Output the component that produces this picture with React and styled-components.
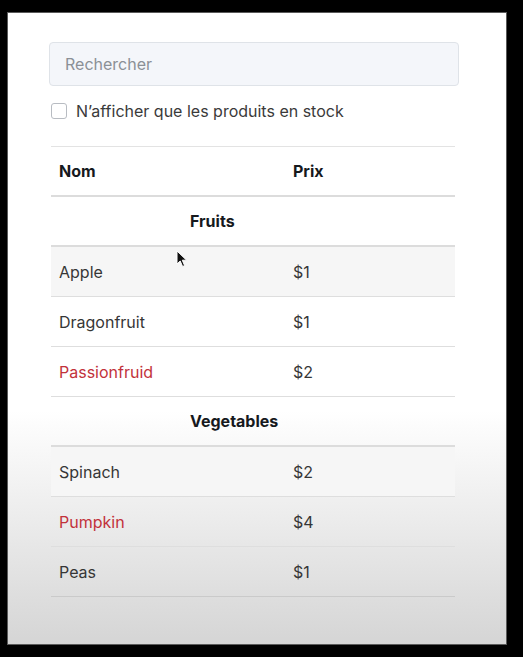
import React from "react";
import styled, { createGlobalStyle } from "styled-components";

const Global = createGlobalStyle`
  html, body { margin: 0; padding: 0; background: #000; }
  body { font-family: Inter, "Noto Sans", "Liberation Sans", sans-serif; }
  * { box-sizing: border-box; }
`;

const Frame = styled.div`
  width: 523px;
  height: 657px;
  background: #000;
  padding: 12px 16px 12px 7px;
`;

const Panel = styled.div`
  position: relative;
  width: 500px;
  height: 633px;
  border: 1px solid #5a5a5a;
  background: linear-gradient(to bottom, #ffffff 0%, #ffffff 63%, #ececec 80%, #d5d5d5 100%);
  padding: 29px 0 0 41px;
`;

const Content = styled.div`
  width: 410px;
  display: flex;
  flex-direction: column;
`;

const SearchInput = styled.input`
  width: 410px;
  height: 44px;
  border: 1px solid #dfe3e8;
  border-radius: 4px;
  background: #f4f6fa;
  padding: 0 15px;
  font-family: inherit;
  font-size: 16px;
  color: #333;
  outline: none;
  &::placeholder { color: #8b9096; }
`;

const CheckRow = styled.label`
  display: flex;
  align-items: center;
  gap: 9px;
  margin: 13px 0 0 2px;
  height: 24px;
  font-size: 16px;
  color: #3a3a3a;
`;

const Box = styled.span`
  width: 16px;
  height: 16px;
  border: 1px solid #b8bcc2;
  border-radius: 3px;
  background: #fff;
  flex: none;
`;

const Table = styled.table`
  margin: 23px 0 0 2px;
  width: 404px;
  border-collapse: separate;
  border-spacing: 0;
  font-size: 16px;
  color: #333;
  border-top: 1px solid #e3e3e3;
`;

const Row = styled.tr`
  background: ${(p) => (p.$striped ? "#f6f6f6" : "transparent")};
  & > * {
    border-bottom: ${(p) =>
      p.$thick ? "2px solid #dcdcdc" : `1px solid ${p.$last ? "#cacaca" : "#dedede"}`};
  }
`;

const HeadCell = styled.th`
  height: 50px;
  padding: 0 8px;
  text-align: left;
  font-weight: 700;
  color: #16191d;
  width: ${(p) => p.$w || "auto"};
`;

const CategoryCell = styled.th`
  height: 50px;
  padding: 0 0 0 139px;
  text-align: left;
  font-weight: 700;
  color: #16191d;
`;

const Cell = styled.td`
  height: 50px;
  padding: 0 8px;
  color: ${(p) => (p.$out ? "#c2323b" : "#363636")};
`;

const Cursor = styled.svg`
  position: absolute;
  left: 168px;
  top: 237px;
`;

const data = [
  {
    category: "Fruits",
    items: [
      { name: "Apple", price: "$1", stocked: true },
      { name: "Dragonfruit", price: "$1", stocked: true },
      { name: "Passionfruid", price: "$2", stocked: false },
    ],
  },
  {
    category: "Vegetables",
    items: [
      { name: "Spinach", price: "$2", stocked: true },
      { name: "Pumpkin", price: "$4", stocked: false },
      { name: "Peas", price: "$1", stocked: true },
    ],
  },
];

export default function App() {
  return (
    <>
      <Global />
      <Frame>
        <Panel>
          <Content>
            <SearchInput placeholder="Rechercher" />
            <CheckRow>
              <Box />
              N’afficher que les produits en stock
            </CheckRow>
            <Table>
              <thead>
                <Row $thick>
                  <HeadCell $w="234px">Nom</HeadCell>
                  <HeadCell>Prix</HeadCell>
                </Row>
              </thead>
              <tbody>
                {data.map((group, g) => (
                  <React.Fragment key={group.category}>
                    <Row $thick>
                      <CategoryCell colSpan={2}>{group.category}</CategoryCell>
                    </Row>
                    {group.items.map((item, i) => (
                      <Row
                        key={item.name}
                        $striped={i === 0}
                        $last={g === data.length - 1 && i === group.items.length - 1}
                      >
                        <Cell $out={!item.stocked}>{item.name}</Cell>
                        <Cell>{item.price}</Cell>
                      </Row>
                    ))}
                  </React.Fragment>
                ))}
              </tbody>
            </Table>
          </Content>
          <Cursor width="12" height="18" viewBox="0 0 12 18">
            <path d="M1 1 L1 14 L4.2 11 L6.6 16.5 L8.6 15.6 L6.3 10.2 L10.6 10.2 Z" fill="#111" stroke="#fff" strokeWidth="1" />
          </Cursor>
        </Panel>
      </Frame>
    </>
  );
}
